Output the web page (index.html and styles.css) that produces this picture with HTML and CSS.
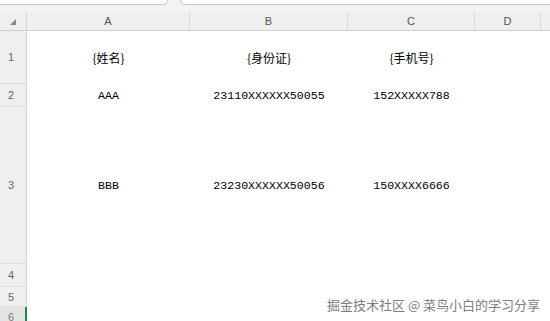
FILE: index.html
```html
<!DOCTYPE html>
<html>
<head>
<meta charset="utf-8">
<link rel="stylesheet" href="styles.css">
</head>
<body>
<div class="topbar">
  <div class="box box-name"></div>
  <div class="box box-formula"></div>
</div>
<div class="sheet">
  <div class="corner"><span class="tri"></span></div>
  <div class="colh">A</div>
  <div class="colh">B</div>
  <div class="colh">C</div>
  <div class="colh">D</div>
  <div class="colh last"></div>

  <div class="rowh">1</div>
  <div class="cell cjk">{姓名}</div>
  <div class="cell cjk">{身份证}</div>
  <div class="cell cjk">{手机号}</div>
  <div class="cell"></div>
  <div class="cell"></div>

  <div class="rowh">2</div>
  <div class="cell mono">AAA</div>
  <div class="cell mono">23110XXXXXX50055</div>
  <div class="cell mono">152XXXXX788</div>
  <div class="cell"></div>
  <div class="cell"></div>

  <div class="rowh">3</div>
  <div class="cell mono">BBB</div>
  <div class="cell mono">23230XXXXXX50056</div>
  <div class="cell mono">150XXXX6666</div>
  <div class="cell"></div>
  <div class="cell"></div>

  <div class="rowh">4</div>
  <div class="cell"></div><div class="cell"></div><div class="cell"></div><div class="cell"></div><div class="cell"></div>

  <div class="rowh">5</div>
  <div class="cell"></div><div class="cell"></div><div class="cell"></div><div class="cell"></div><div class="cell"></div>

  <div class="rowh sel">6</div>
  <div class="cell"></div><div class="cell"></div><div class="cell"></div><div class="cell"></div><div class="cell"></div>
</div>
<div class="watermark">掘金技术社区 @ 菜鸟小白的学习分享</div>
</body>
</html>
```

FILE: styles.css
```css
html, body {
  margin: 0;
  padding: 0;
  width: 550px;
  height: 321px;
  overflow: hidden;
  background: #f3f3f3;
  font-family: "Liberation Sans", "Noto Sans CJK SC", sans-serif;
}

.topbar {
  height: 12px;
  display: flex;
  gap: 12px;
  align-items: flex-start;
}

.box {
  height: 5px;
  background: #ffffff;
  border: 1px solid #c9c9c9;
  border-top: none;
  box-sizing: border-box;
}

.box-name {
  width: 168px;
  border-left: none;
  border-radius: 0 0 5px 0;
}

.box-formula {
  flex: 1;
  border-right: none;
  border-radius: 0 0 0 5px;
}

.sheet {
  display: grid;
  grid-template-columns: 27px 163px 158px 127px 66px 1fr;
  grid-template-rows: 19px 53px 23px 157px 23px 20px 20px;
  background: #ffffff;
}

.corner {
  background: #efefef;
  border-right: 1px solid #d4d4d4;
  border-bottom: 1px solid #cfcfcf;
  box-sizing: border-box;
  position: relative;
}

.tri {
  position: absolute;
  left: 10px;
  top: 7px;
  width: 0;
  height: 0;
  border-left: 6px solid transparent;
  border-bottom: 6px solid #8a8a8a;
}

.colh {
  background: #efefef;
  border-right: 1px solid #d8d8d8;
  border-bottom: 1px solid #cfcfcf;
  box-sizing: border-box;
  display: flex;
  align-items: center;
  justify-content: center;
  font-size: 11px;
  color: #555555;
}

.colh.last {
  border-right: none;
}

.rowh {
  background: #efefef;
  border-right: 1px solid #d4d4d4;
  border-bottom: 1px solid #dddddd;
  box-sizing: border-box;
  display: flex;
  align-items: center;
  padding-left: 8px;
  font-size: 11px;
  color: #666666;
}

.rowh.sel {
  background: #e4e4e4;
  border-right: 2px solid #1e8a4c;
  border-bottom: none;
  align-items: flex-start;
  padding-top: 4px;
  color: #777777;
}

.cell {
  display: flex;
  align-items: center;
  justify-content: center;
  color: #000000;
  background: #ffffff;
}

.cjk {
  font-family: "Noto Sans CJK SC", sans-serif;
  font-size: 12px;
}

.mono {
  font-family: "Liberation Mono", monospace;
  font-size: 11.6px;
}

.watermark {
  position: absolute;
  left: 327px;
  top: 295px;
  font-family: "Noto Sans CJK SC", sans-serif;
  font-size: 13px;
  color: #7e7e7e;
  text-shadow: 0 0 2px #ffffff, 0 0 2px #ffffff;
  white-space: nowrap;
}
```
